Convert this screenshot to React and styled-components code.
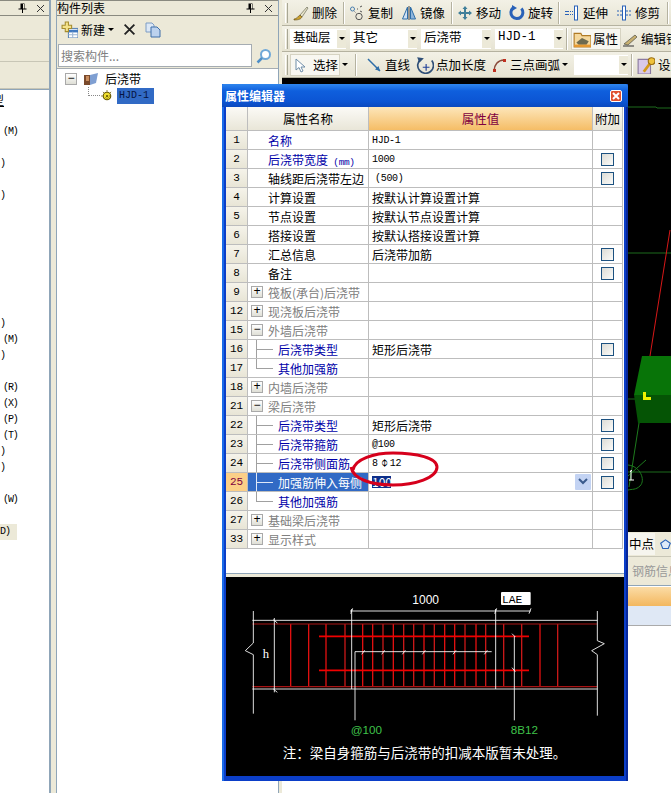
import React from 'react'
import styled, { createGlobalStyle } from 'styled-components'

const cjk = '"Noto Sans CJK SC", "Liberation Sans", sans-serif'
const mono = '"Liberation Mono", "Noto Sans CJK SC", monospace'

const GlobalStyle = createGlobalStyle`
  html, body { margin: 0; padding: 0; background: #fff; }
  body { font-family: ${cjk}; font-size: 12px; color: #000; }
  * { box-sizing: border-box; }
`

const Page = styled.div`
  position: relative;
  width: 671px;
  height: 793px;
  overflow: hidden;
  display: grid;
  grid-template-columns: 51px 5px 222px 4px 389px;
  background: #fff;
`

const Gutter = styled.div`
  background: #ece9d8;
  border-left: ${p => (p.$line ? '1px solid #8fa5b8' : '0')};
`

const Column = styled.div`
  display: flex;
  flex-direction: column;
  min-width: 0;
  overflow: hidden;
  border-right: ${p => (p.$edge ? '2px solid #8fa5b8' : '0')};
  border-left: ${p => (p.$start ? '1px solid #8fa5b8' : '0')};
`

const PanelTitle = styled.div`
  height: 16px;
  flex: none;
  display: flex;
  align-items: center;
  justify-content: flex-end;
  gap: 9px;
  padding-right: ${p => p.$right || 3}px;
  background: #ece9d8;
  border-top: 1px solid #8a8a80;
  border-bottom: 1px solid #8a8a80;
  line-height: 14px;
`

const PanelName = styled.span`
  margin-right: auto;
  font-size: 12px;
`

const Band = styled.div`
  height: ${p => p.$h}px;
  flex: none;
  background: #ece9d8;
  border-bottom: 1px solid #c8c6b6;
`

const FragList = styled.div`
  flex: 1;
  background: #fff;
  padding-top: 2px;
  border-top: 1px solid #8fa5b8;
`

const Frag = styled.div`
  height: 16px;
  width: ${p => (p.$mark ? '17px' : 'auto')};
  line-height: 16px;
  padding-left: ${p => p.$pad || 0}px;
  font-family: ${mono};
  font-size: 10px;
  letter-spacing: -1.1px;
  white-space: nowrap;
  background: ${p => (p.$mark ? '#ece9d8' : 'transparent')};
`

const Clipped = styled.span`
  margin-left: -8px;
  font-family: ${cjk};
  font-size: 12px;
  letter-spacing: 0;
  text-decoration: underline;
`

const ListBar = styled.div`
  height: 27px;
  flex: none;
  display: flex;
  align-items: center;
  padding-left: 4px;
  background: #ece9d8;
`

const ListTool = styled.span`
  display: inline-flex;
  align-items: center;
  gap: 3px;
  flex: none;
  margin-right: ${p => p.$mr || 0}px;
`

const SearchRow = styled.div`
  height: 25px;
  flex: none;
  display: flex;
  align-items: center;
  padding: 0 6px 0 1px;
  background: #ece9d8;
  justify-content: space-between;
`

const SearchBox = styled.div`
  width: 194px;
  height: 23px;
  padding-left: 2px;
  line-height: 21px;
  background: #fff;
  border: 1px solid #a5acb2;
  color: #808080;
`

const Tree = styled.div`
  flex: 1;
  background: #fff;
  border-top: 1px solid #a5acb2;
  padding-top: 1px;
`

const TreeRow = styled.div`
  height: 17px;
  display: flex;
  align-items: center;
  padding-left: ${p => p.$pad}px;
  gap: ${p => p.$gap}px;
`

const TreeDots = styled.span`
  width: 12px;
  height: 9px;
  margin-top: -9px;
  border-left: 1px dotted #888;
  border-bottom: 1px dotted #888;
`

const Picked = styled.span`
  width: 37px;
  height: 16px;
  line-height: 16px;
  padding-left: 2px;
  background: #316ac5;
  color: #061440;
  font-family: ${mono};
  font-size: 10px;
  margin-left: 3px;
`

const ToolRow = styled.div`
  height: 26px;
  flex: none;
  display: flex;
  align-items: center;
  padding-left: 3px;
  background: linear-gradient(#f3f1e6, #e6e3d2);
  border-bottom: 1px solid #b5b2a0;
  white-space: nowrap;
`

const Grip = styled.span`
  width: 3px;
  height: 20px;
  flex: none;
  margin-right: ${p => p.$mr}px;
  border-left: 1px solid #fff;
  border-right: 1px solid #a8a694;
`

const Sep = styled.span`
  width: 2px;
  height: 22px;
  flex: none;
  margin: 0 3px;
  border-left: 1px solid #b5b2a0;
  border-right: 1px solid #fff;
`

const Tool = styled.span`
  display: inline-flex;
  align-items: center;
  gap: ${p => p.$gap ?? 3}px;
  width: ${p => p.$w}px;
  height: 22px;
  flex: none;
  margin-left: ${p => p.$ml || 0}px;
  padding-left: 1px;
  background: ${p => (p.$on ? '#f8f7f1' : 'transparent')};
  border: ${p => (p.$on ? '1px solid #d6d3c2' : '0')};
  font-size: 12.5px;
`

const Caret = styled.i`
  width: 0;
  height: 0;
  flex: none;
  margin: ${p => p.$m || '0'};
  border-left: 3px solid transparent;
  border-right: 3px solid transparent;
  border-top: 3px solid #000;
`

const Combo = styled.span`
  display: flex;
  align-items: center;
  width: ${p => p.$w}px;
  height: 20px;
  flex: none;
  margin-left: ${p => p.$ml || 0}px;
  padding-left: 3px;
  background: #fff;
  line-height: 18px;
`

const ComboText = styled.span`
  flex: 1;
  margin-top: -3px;
  font-size: 12.5px;
  font-family: ${p => (p.$latin ? mono : cjk)};
`

const ComboBtn = styled.span`
  width: 9px;
  height: 18px;
  display: flex;
  align-items: center;
  justify-content: center;
  background: #ece9d8;
`

const Canvas = styled.div`
  height: 454px;
  flex: none;
  background: #000;
  overflow: hidden;
  svg { display: block; }
`

const SnapRow = styled.div`
  height: 25px;
  flex: none;
  display: flex;
  align-items: center;
  gap: 5px;
  padding-left: 345px;
  background: #ece9d8;
  font-size: 12.5px;
  border-bottom: 1px solid #c8c6b6;
`

const SnapLabel = styled.span`
  width: 28px;
  flex: none;
  padding-left: 2px;
  white-space: nowrap;
  background: #f6f5ee;
  line-height: 22px;
`

const InfoTab = styled.div`
  height: 29px;
  flex: none;
  padding-left: 350px;
  line-height: 28px;
  white-space: nowrap;
  color: #999;
  font-size: 12px;
  background: #ece9d8;
  border-bottom: 1px solid #8fa5b8;
`

const OrangeBar = styled.div`
  height: 19px;
  flex: none;
  margin-top: 1px;
  background: linear-gradient(#fbdca6, #f3b75e);
`

const BlueBar = styled.div`
  height: 20px;
  flex: none;
  background: #dfe8f5;
  border-bottom: 1px solid #aaa;
`

/* floating dialog */
const Dialog = styled.div`
  position: absolute;
  left: 222px;
  top: 84px;
  width: 406px;
  height: 697px;
  display: flex;
  flex-direction: column;
  padding: 0 4px 5px;
  background: #0b3ec8;
  box-shadow: inset 2px 0 #1a6be8, inset -2px 0 #07279a;
`

const TitleBar = styled.div`
  height: 23px;
  flex: none;
  display: flex;
  align-items: center;
  justify-content: space-between;
  margin: 0 -4px;
  padding: 0 6px 0 3px;
  border-radius: 2px 2px 0 0;
  background: linear-gradient(#2f86ee, #0f5fdd 30%, #0c55d4 75%, #0b49be);
  color: #fff;
  font-size: 12px;
  font-weight: 700;
`

const CloseBtn = styled.span`
  width: 12px;
  height: 12px;
  display: flex;
  border: 1px solid #fff;
  border-radius: 2px;
  background: #e0502e;
`

const Client = styled.div`
  position: relative;
  flex: 1;
  display: flex;
  flex-direction: column;
  background: #fff;
`

const Row = styled.div`
  display: grid;
  grid-template-columns: 22px 121px 224px 30px;
  height: ${p => p.$h || 19}px;
  flex: none;
  width: 397px;
`

const NumCell = styled.div`
  display: flex;
  align-items: center;
  justify-content: center;
  background: ${p => (p.$active ? '#fbcf87' : 'linear-gradient(#f5f3ea, #e8e5d6)')};
  color: ${p => (p.$active ? '#800040' : '#000')};
  border-bottom: 1px solid #bdbdbd;
  border-right: 1px solid #bdbdbd;
  font-family: ${mono};
  font-size: 11px;
`

const HeadCell = styled.div`
  display: flex;
  align-items: center;
  justify-content: center;
  font-size: 12.5px;
  background: ${p => (p.$main
    ? 'linear-gradient(#fde6ba, #f5bd66)'
    : 'linear-gradient(#fbfaf6, #e9e6d8)')};
  color: ${p => (p.$main ? '#800040' : '#000')};
  border-bottom: 1px solid #bdbdbd;
  border-right: 1px solid #bdbdbd;
`

const NameCell = styled.div`
  display: flex;
  align-items: center;
  gap: 5px;
  min-width: 0;
  overflow: hidden;
  white-space: nowrap;
  padding-left: ${p => (p.$group ? 3 : p.$child ? 30 : 20)}px;
  background-color: ${p => (p.$active ? '#316ac5' : '#fff')};
  color: ${p => (p.$active ? '#fff' : p.$tone)};
  border-bottom: 1px solid #bdbdbd;
  border-right: 1px solid #bdbdbd;
  ${p => (p.$child ? `
    background-image:
      linear-gradient(${p.$active ? '#dfe8f8' : '#a0a0a0'}, ${p.$active ? '#dfe8f8' : '#a0a0a0'}),
      linear-gradient(${p.$active ? '#dfe8f8' : '#a0a0a0'}, ${p.$active ? '#dfe8f8' : '#a0a0a0'});
    background-repeat: no-repeat;
    background-size: 1px ${p.$last ? '10px' : '100%'}, 17px 1px;
    background-position: 8px 0, 8px 9px;
  ` : '')}
`

const Latin = styled.span`
  font-family: ${mono};
  font-size: 9.5px;
  letter-spacing: -0.4px;
`

const Expander = styled.span`
  width: 12px;
  height: 12px;
  flex: none;
  display: flex;
  align-items: center;
  justify-content: center;
  border: 1px solid #a9a9a9;
  background: linear-gradient(#fff, #dfdfd6);
  color: #000;
  font-family: ${mono};
  font-size: 12px;
  line-height: 10px;
`

const ValueCell = styled.div`
  display: flex;
  align-items: center;
  padding-left: ${p => p.$pad || 3}px;
  padding-right: 1px;
  border-bottom: 1px solid #bdbdbd;
  border-right: 1px solid #bdbdbd;
  white-space: nowrap;
  font-family: ${p => (p.$latin ? mono : cjk)};
  font-size: ${p => (p.$latin ? '10px' : '12px')};
  letter-spacing: ${p => (p.$latin ? '-0.3px' : '0')};
`

const RebarMark = styled.span`
  margin: 0 2px 0 3px;
  font-family: "DejaVu Sans", sans-serif;
  font-size: 12px;
  letter-spacing: 0;
`

const PickedValue = styled.span`
  height: 12px;
  width: 19px;
  line-height: 12px;
  background: #0d2f8a;
  color: #fff;
`

const DropBtn = styled.span`
  width: 16px;
  height: 16px;
  margin-left: auto;
  display: flex;
  align-items: center;
  justify-content: center;
  background: #c3d3f3;
  border-radius: 1px;
`

const CheckCell = styled.div`
  display: flex;
  align-items: center;
  justify-content: center;
  border-bottom: 1px solid #bdbdbd;
  border-right: 1px solid #bdbdbd;
`

const CheckBox = styled.span`
  width: 13px;
  height: 13px;
  border: 1px solid #1c5180;
  background: linear-gradient(135deg, #dcdcd6, #fbfbf9);
`

const Spacer = styled.div`
  height: 25px;
  flex: none;
  border-bottom: 1px solid #8fa5b8;
`

const Strip = styled.div`
  height: 3px;
  flex: none;
  background: #ece9d8;
`

const Drawing = styled.div`
  flex: 1;
  background: #000;
  svg { display: block; }
`

const Ellipse = styled.svg`
  position: absolute;
  left: 123px;
  top: 344px;
  pointer-events: none;
`

/* small drawn icons */
const Ico = ({ children, size = 16 }) => (
  <svg width={size} height={size} viewBox="0 0 16 16" style={{ flex: 'none' }}>{children}</svg>
)

const Brush = () => (
  <Ico>
    <path d="M7 10 L14 2 L15 3 L9 12 Z" fill="#e8e4c8" stroke="#6b6b5a" strokeWidth=".7" />
    <path d="M1 14 C4 14 5 11 7 10 L9 12 C8 14 6 15 1 15 Z" fill="#c9a030" stroke="#5f4a10" strokeWidth=".6" />
  </Ico>
)
const CopyCircles = () => (
  <Ico>
    <circle cx="3.5" cy="4" r="2" fill="none" stroke="#4a7fb0" />
    <path d="M8 4h1M11 2l2-1M11 6l2 1" stroke="#555" fill="none" />
    <circle cx="10" cy="11.5" r="3.2" fill="none" stroke="#555" />
    <path d="M5 6 L8 9" stroke="#888" strokeDasharray="1 1" />
  </Ico>
)
const Mirror = () => (
  <Ico>
    <path d="M6.5 2 V14 H1.5 Z" fill="#cfe0f2" stroke="#2f6ea8" />
    <path d="M9.5 2 V14 H14.5 Z" fill="#8fb6dc" stroke="#2f6ea8" />
    <path d="M8 1 V15" stroke="#444" />
  </Ico>
)
const MoveArrows = () => (
  <Ico>
    <path d="M8 1 L10.5 4 H9 V7 H12 V5.5 L15 8 L12 10.5 V9 H9 V12 H10.5 L8 15 L5.5 12 H7 V9 H4 V10.5 L1 8 L4 5.5 V7 H7 V4 H5.5 Z" fill="#3f7f9a" />
  </Ico>
)
const Rotate = () => (
  <Ico>
    <path d="M4 3 A6 6 0 1 0 12.4 3.6" fill="none" stroke="#2a62b8" strokeWidth="3" />
    <path d="M3 0 L8 3 L3 6 Z" fill="#2a62b8" />
  </Ico>
)
const Extend = () => (
  <Ico>
    <path d="M1 6.5 H5 M1 9.5 H5" stroke="#2a62b8" />
    <path d="M6 6.5 H9 M6 9.5 H9" stroke="#2a62b8" strokeDasharray="1 1" />
    <rect x="10.5" y="1" width="3" height="14" fill="#fff" stroke="#2a62b8" />
  </Ico>
)
const Trim = () => (
  <Ico>
    <path d="M1 6 H6 M1 10 H6 M10 6 H15 M10 10 H15" stroke="#2a62b8" strokeDasharray="2 1" />
    <rect x="6.5" y="1" width="3" height="14" fill="#fff" stroke="#2a62b8" />
  </Ico>
)
const Folder = () => (
  <Ico size={18}>
    <path d="M1 3 H7 L8 5 H16 V15 H1 Z" fill="#f5d89c" stroke="#b07a24" />
    <path d="M3 11 L8 7 L14 10 L12 13 H5 Z" fill="#6d6a50" />
    <path d="M1 13 H16 V15 H1 Z" fill="#e89a30" />
  </Ico>
)
const Pencil = () => (
  <Ico>
    <path d="M2 13 L13 4 L15 6 L6 14 Z" fill="#c8b070" stroke="#4e4e44" strokeWidth=".7" />
    <path d="M1 15 H12" stroke="#333" />
  </Ico>
)
const Pointer = () => (
  <Ico>
    <path d="M4 2 V13 L7 10.5 L9 15 L11 14 L9 10 H13 Z" fill="#fff" stroke="#6f8da8" />
  </Ico>
)
const LineArrow = () => (
  <Ico>
    <path d="M2 2 L14 14" stroke="#2f6ea8" strokeWidth="1.5" />
    <path d="M14 14 L9 12.5 L12.5 9 Z" fill="#2f6ea8" />
  </Ico>
)
const PointLength = () => (
  <Ico size={18}>
    <path d="M4 3 A7 7 0 1 0 14 4" fill="none" stroke="#2f4f78" strokeWidth="1.5" />
    <path d="M1 1 L7 2 L3 6 Z" fill="#2f4f78" />
    <path d="M9 7 V13 M6 10 H12" stroke="#1f3f98" />
  </Ico>
)
const Arc = () => (
  <Ico>
    <path d="M3 14 C3 8 7 3 13 3" fill="none" stroke="#8a4a3a" strokeWidth="1.5" />
    <rect x="2" y="12" width="3" height="3" fill="#c03020" />
    <rect x="12" y="2" width="3" height="3" fill="#c03020" />
  </Ico>
)
const KeyFolder = () => (
  <Ico size={18}>
    <path d="M1 3 H12 V16 H1 Z" fill="#d9c9e8" stroke="#8a7aa0" />
    <path d="M6 14 L12 6" stroke="#d49a1a" strokeWidth="2.5" />
    <circle cx="13" cy="4.5" r="3" fill="#efc23c" stroke="#9a6d10" />
  </Ico>
)
const NewTable = () => (
  <Ico size={17}>
    <rect x="7" y="7" width="9" height="9" fill="#fff" stroke="#5c85b5" />
    <path d="M7 9.5 H16" stroke="#3f78c0" strokeWidth="2.5" />
    <path d="M11 10 V16 M7 13 H16" stroke="#9db6d3" />
    <path d="M4 1 H7 V4 H10 V7 H7 V10 H4 V7 H1 V4 H4 Z" fill="#f4e28a" stroke="#a58c2e" />
  </Ico>
)
const Cross = () => (
  <Ico size={13}>
    <path d="M2 2 L14 14 M14 2 L2 14" stroke="#222" strokeWidth="2.2" />
  </Ico>
)
const Docs = () => (
  <Ico>
    <path d="M1 1 H7 L9 3 V10 H1 Z" fill="#dce8f6" stroke="#7d9cc4" />
    <path d="M6 5 H12 L15 8 V15 H6 Z" fill="#bcd2ee" stroke="#3f6ea8" />
  </Ico>
)
const Loupe = () => (
  <Ico>
    <circle cx="9.5" cy="6.5" r="4.5" fill="#fff" stroke="#6fa8d8" strokeWidth="2" />
    <path d="M6 10 L1.5 14.5" stroke="#4f8fc8" strokeWidth="2.5" />
  </Ico>
)
const Cube = () => (
  <Ico>
    <path d="M1 4 H7 V14 H1 Z" fill="#7a4a2c" />
    <path d="M3 5 H6 V10 H3 Z" fill="#c98d5e" />
    <path d="M7 4 L15 2 L13 12 L7 14 Z" fill="#7f9fd2" />
  </Ico>
)
const Gear = () => (
  <Ico size={12}>
    <circle cx="8" cy="8" r="5" fill="#f0e030" stroke="#6a5a00" strokeWidth="1.5" />
    <path d="M8 0 V16 M0 8 H16 M2.5 2.5 L13.5 13.5 M13.5 2.5 L2.5 13.5" stroke="#6a5a00" strokeDasharray="2.5 8" />
    <circle cx="8" cy="8" r="1.5" fill="#6a5a00" />
  </Ico>
)
const Pin = () => (
  <svg width="9" height="10" viewBox="0 0 9 10"><path d="M2.5 0.5 H6.5 V5.5 H8.5 V6.5 H5 V10 H4 V6.5 H0.5 V5.5 H2.5 Z M5 1 V5.5 H6 V1 Z" fill="#000" fillRule="evenodd" /></svg>
)
const SmallX = () => (
  <svg width="9" height="9" viewBox="0 0 9 9"><path d="M1 1 L8 8 M8 1 L1 8" stroke="#333" /></svg>
)
const Pentagon = () => (
  <svg width="16" height="16" viewBox="0 0 16 16"><path d="M8 2 L15 7 L12 14.5 H4 L1 7 Z" fill="#dfeaf8" stroke="#2a62b8" strokeWidth="1.6" /></svg>
)

const leftFrags = [
  { n: 2, t: '(M)', pad: 3 }, { n: 4, t: ')' }, { n: 6, t: ')' },
  { n: 14, t: ')' }, { n: 15, t: '(M)', pad: 3 }, { n: 16, t: ')' }, { n: 18, t: '(R)', pad: 3 },
  { n: 19, t: '(X)', pad: 3 }, { n: 20, t: '(P)', pad: 3 }, { n: 21, t: '(T)', pad: 3 }, { n: 22, t: ')' },
  { n: 23, t: ')' }, { n: 25, t: '(W)', pad: 3 }, { n: 27, t: 'D)', mark: true },
]

const fragRows = Array.from({ length: 28 }, (_, i) => leftFrags.find(f => f.n === i) || { n: i, t: '' })

const BLUE = '#0000a8'
const GRAY = '#808080'

const rows = [
  { no: 1, name: '名称', tone: BLUE, value: 'HJD-1', latin: true },
  { no: 2, name: '后浇带宽度', unit: '(mm)', tone: BLUE, value: '1000', latin: true, check: true },
  { no: 3, name: '轴线距后浇带左边', tone: '#000', value: '(500)', latin: true, pad: 6, check: true },
  { no: 4, name: '计算设置', tone: '#000', value: '按默认计算设置计算' },
  { no: 5, name: '节点设置', tone: '#000', value: '按默认节点设置计算' },
  { no: 6, name: '搭接设置', tone: '#000', value: '按默认搭接设置计算' },
  { no: 7, name: '汇总信息', tone: '#000', value: '后浇带加筋', check: true },
  { no: 8, name: '备注', tone: '#000', check: true },
  { no: 9, name: '筏板(承台)后浇带', group: '+', tone: GRAY },
  { no: 12, name: '现浇板后浇带', group: '+', tone: GRAY },
  { no: 15, name: '外墙后浇带', group: '−', tone: GRAY },
  { no: 16, name: '后浇带类型', child: true, tone: BLUE, value: '矩形后浇带', check: true },
  { no: 17, name: '其他加强筋', child: true, last: true, tone: BLUE },
  { no: 18, name: '内墙后浇带', group: '+', tone: GRAY },
  { no: 21, name: '梁后浇带', group: '−', tone: GRAY },
  { no: 22, name: '后浇带类型', child: true, tone: BLUE, value: '矩形后浇带', check: true },
  { no: 23, name: '后浇带箍筋', child: true, tone: BLUE, value: '@100', latin: true, check: true },
  { no: 24, name: '后浇带侧面筋', child: true, tone: BLUE, rebar: true, latin: true, check: true },
  { no: 25, name: '加强筋伸入每侧', child: true, tone: BLUE, active: true, check: true },
  { no: 26, name: '其他加强筋', child: true, last: true, tone: BLUE },
  { no: 27, name: '基础梁后浇带', group: '+', tone: GRAY },
  { no: 33, name: '显示样式', group: '+', tone: GRAY },
]

const stirrups = [212, 266, 318, 375, 428, 458, 489, 520, 551, 581, 612, 643, 674, 704, 735, 768, 797, 851, 905, 960, 1013]
const ticks = [430, 490, 552, 612, 704, 798]
const note = '注\uFF1A梁自身箍筋与后浇带的扣减本版暂未处理。'

const BeamDrawing = () => (
  <svg width="398" height="199" viewBox="18 22 1194 597">
    {stirrups.map(x => <path key={x} d={`M${x} 163 V351`} stroke={x % 2 ? '#c81818' : '#e01010'} strokeWidth="4" />)}
    <path d="M97 163 H1132 M97 351 H1132" stroke="#a81414" strokeWidth="3.5" />
    <path d="M297 200 H927 M297 302 H927" stroke="#f00000" strokeWidth="5" />
    <g stroke="#fff" strokeWidth="2.6" fill="none">
      <path d="M97 152 H1132 M97 358 H1132" />
      <path d="M100 124 V220 L76 243 L100 255 V432 M1132 124 V213 L1153 222 L1115 243 L1132 255 V438" />
      <path d="M163 145 V368 M395 118 V358 M827 118 V358" />
      <path d="M390 124 H932" />
      <path d="M392 132 L398 116 M824 132 L830 116 M927 132 L933 116 M160 150 L172 160 M160 358 L172 368" />
      <path d="M815 246 H405 V452 M883 200 V452" />
      {ticks.map(x => <path key={x} d={`M${x - 5} 254 L${x + 4} 242`} />)}
      <path d="M876 192 L886 202 M876 294 L886 306" />
    </g>
    <text x="617" y="104" fill="#fff" fontSize="36" textAnchor="middle" fontFamily='"Liberation Sans", sans-serif'>1000</text>
    <rect x="843" y="67" width="89" height="39" rx="3" fill="#fff" />
    <text x="846" y="100" fill="#000" fontSize="34" fontFamily={mono}>LAE</text>
    <text x="128" y="266" fill="#fff" fontSize="38" fontFamily='"Liberation Serif", serif'>h</text>
    <g fontFamily='"Liberation Sans", sans-serif' fontSize="35" fill="#3fc24a" textAnchor="middle">
      <text x="439" y="494">@100</text>
      <text x="913" y="494">8B12</text>
    </g>
    <text x="188" y="566" fill="#fff" fontSize="40.5" fontFamily={cjk}>{note}</text>
  </svg>
)

const SceneView = () => (
  <svg width="389" height="454" viewBox="282 78 389 454">
    <path d="M628 107 H656 L657 108 H671 M628 253 H671 M628 399 H640 M628 472 H671" stroke="#1d6b1d" fill="none" />
    <path d="M670 230 L650 356" stroke="#d81818" />
    <path d="M642 356 H671 V395 H634 Z" fill="#087408" />
    <path d="M634 395 H671 V423 H638 Z" fill="#055405" />
    <path d="M639 423 L629 487 M628 465 C640 466 646 480 640 486 C636 490 632 489 628 490 M628 476 L646 460" stroke="#1d7a1d" fill="none" />
    <path d="M643 392 V400 H651 V397 H646 V392 Z" fill="#f0f000" />
    <path d="M631 470 V480 M629 480 H634 M630 472 L632 470" stroke="#fff" fill="none" />
  </svg>
)

const App = () => (
  <Page>
    <GlobalStyle />
    <Column $edge>
      <PanelTitle $right={4}><Pin /><SmallX /></PanelTitle>
      <Band $h={24} />
      <Band $h={22} />
      <Band $h={27} />
      <FragList>
        <Frag><Clipped>型</Clipped></Frag>
        {fragRows.slice(1).map(f => (
          <Frag key={f.n} $pad={f.pad} $mark={f.mark}>{f.t}</Frag>
        ))}
      </FragList>
    </Column>
    <Gutter />
    <Column $start>
      <PanelTitle $right={5}>
        <PanelName>构件列表</PanelName>
        <Pin /><SmallX />
      </PanelTitle>
      <ListBar>
        <ListTool $mr={9}>
          <NewTable />新建<Caret />
        </ListTool>
        <ListTool $mr={9}><Cross /></ListTool>
        <ListTool><Docs /></ListTool>
      </ListBar>
      <SearchRow>
        <SearchBox>搜索构件...</SearchBox>
        <Loupe />
      </SearchRow>
      <Tree>
        <TreeRow $pad={8} $gap={6}>
          <Expander>−</Expander>
          <Cube />
          <span>后浇带</span>
        </TreeRow>
        <TreeRow $pad={31} $gap={1}>
          <TreeDots />
          <Gear />
          <Picked>HJD-1</Picked>
        </TreeRow>
      </Tree>
    </Column>
    <Gutter $line />
    <Column>
      <ToolRow>
        <Grip $mr={4} />
        <Tool $w={48}><Brush />删除</Tool>
        <Sep />
        <Tool $w={52}><CopyCircles />复制</Tool>
        <Tool $w={48}><Mirror />镜像</Tool>
        <Sep />
        <Tool $w={52}><MoveArrows />移动</Tool>
        <Tool $w={47}><Rotate />旋转</Tool>
        <Sep />
        <Tool $w={52}><Extend />延伸</Tool>
        <Tool $w={49}><Trim />修剪</Tool>
        <Sep />
      </ToolRow>
      <ToolRow>
        <Grip $mr={2} />
        <Combo $w={56}><ComboText>基础层</ComboText><ComboBtn><Caret /></ComboBtn></Combo>
        <Combo $w={67} $ml={4}><ComboText>其它</ComboText><ComboBtn><Caret /></ComboBtn></Combo>
        <Combo $w={70} $ml={4}><ComboText>后浇带</ComboText><ComboBtn><Caret /></ComboBtn></Combo>
        <Combo $w={68} $ml={4}><ComboText $latin>HJD-1</ComboText><ComboBtn><Caret /></ComboBtn></Combo>
        <Sep />
        <Tool $w={50} $on $gap={2}><Folder />属性</Tool>
        <Tool $w={60}><Pencil />编辑钢筋</Tool>
      </ToolRow>
      <ToolRow>
        <Grip $mr={2} />
        <Tool $w={50} $on $gap={5}><Pointer />选择</Tool>
        <Caret $m="0 4px 0 2px" />
        <Sep />
        <Tool $w={50} $ml={5}><LineArrow />直线</Tool>
        <Tool $w={75} $gap={2}><PointLength />点加长度</Tool>
        <Tool $w={72}><Arc />三点画弧</Tool>
        <Caret $m="0 6px 0 0" />
        <Combo $w={54}><ComboText /><ComboBtn><Caret /></ComboBtn></Combo>
        <Sep />
        <Tool $w={50}><KeyFolder />设置</Tool>
      </ToolRow>
      <Canvas><SceneView /></Canvas>
      <SnapRow>
        <SnapLabel>中点</SnapLabel>
        <Pentagon />
      </SnapRow>
      <InfoTab>钢筋信息</InfoTab>
      <OrangeBar />
      <BlueBar />
    </Column>

    <Dialog>
      <TitleBar>
        属性编辑器
        <CloseBtn>
          <svg width="10" height="10" viewBox="0 0 10 10"><path d="M2 2 L8 8 M8 2 L2 8" stroke="#fff" strokeWidth="2" /></svg>
        </CloseBtn>
      </TitleBar>
      <Client>
        <Row $h={24}>
          <HeadCell />
          <HeadCell>属性名称</HeadCell>
          <HeadCell $main>属性值</HeadCell>
          <HeadCell>附加</HeadCell>
        </Row>
        {rows.map(r => (
          <Row key={r.no}>
            <NumCell $active={r.active}>{r.no}</NumCell>
            <NameCell $group={!!r.group} $child={r.child} $last={r.last} $active={r.active} $tone={r.tone}>
              {r.group && <Expander>{r.group}</Expander>}
              <span>{r.name}{r.unit && <Latin> {r.unit}</Latin>}</span>
            </NameCell>
            <ValueCell $latin={r.latin} $pad={r.pad}>
              {r.value}
              {r.rebar && <>8<RebarMark>⌽</RebarMark>12</>}
              {r.active && <PickedValue>100</PickedValue>}
              {r.active && (
                <DropBtn>
                  <svg width="10" height="8" viewBox="0 0 10 8"><path d="M1 1 L5 5 L9 1" fill="none" stroke="#3a5a8c" strokeWidth="2" /></svg>
                </DropBtn>
              )}
            </ValueCell>
            <CheckCell>{r.check && <CheckBox />}</CheckCell>
          </Row>
        ))}
        <Spacer />
        <Strip />
        <Drawing><BeamDrawing /></Drawing>
        <Ellipse width="92" height="38" viewBox="0 0 92 38">
          <path d="M4 19 C6 8 25 2 44 2 C68 2 88 7 88 16 C88 27 66 34 44 34 C22 34 4 28 2 16" fill="none" stroke="#d6001c" strokeWidth="3" />
        </Ellipse>
      </Client>
    </Dialog>
  </Page>
)

export default App
